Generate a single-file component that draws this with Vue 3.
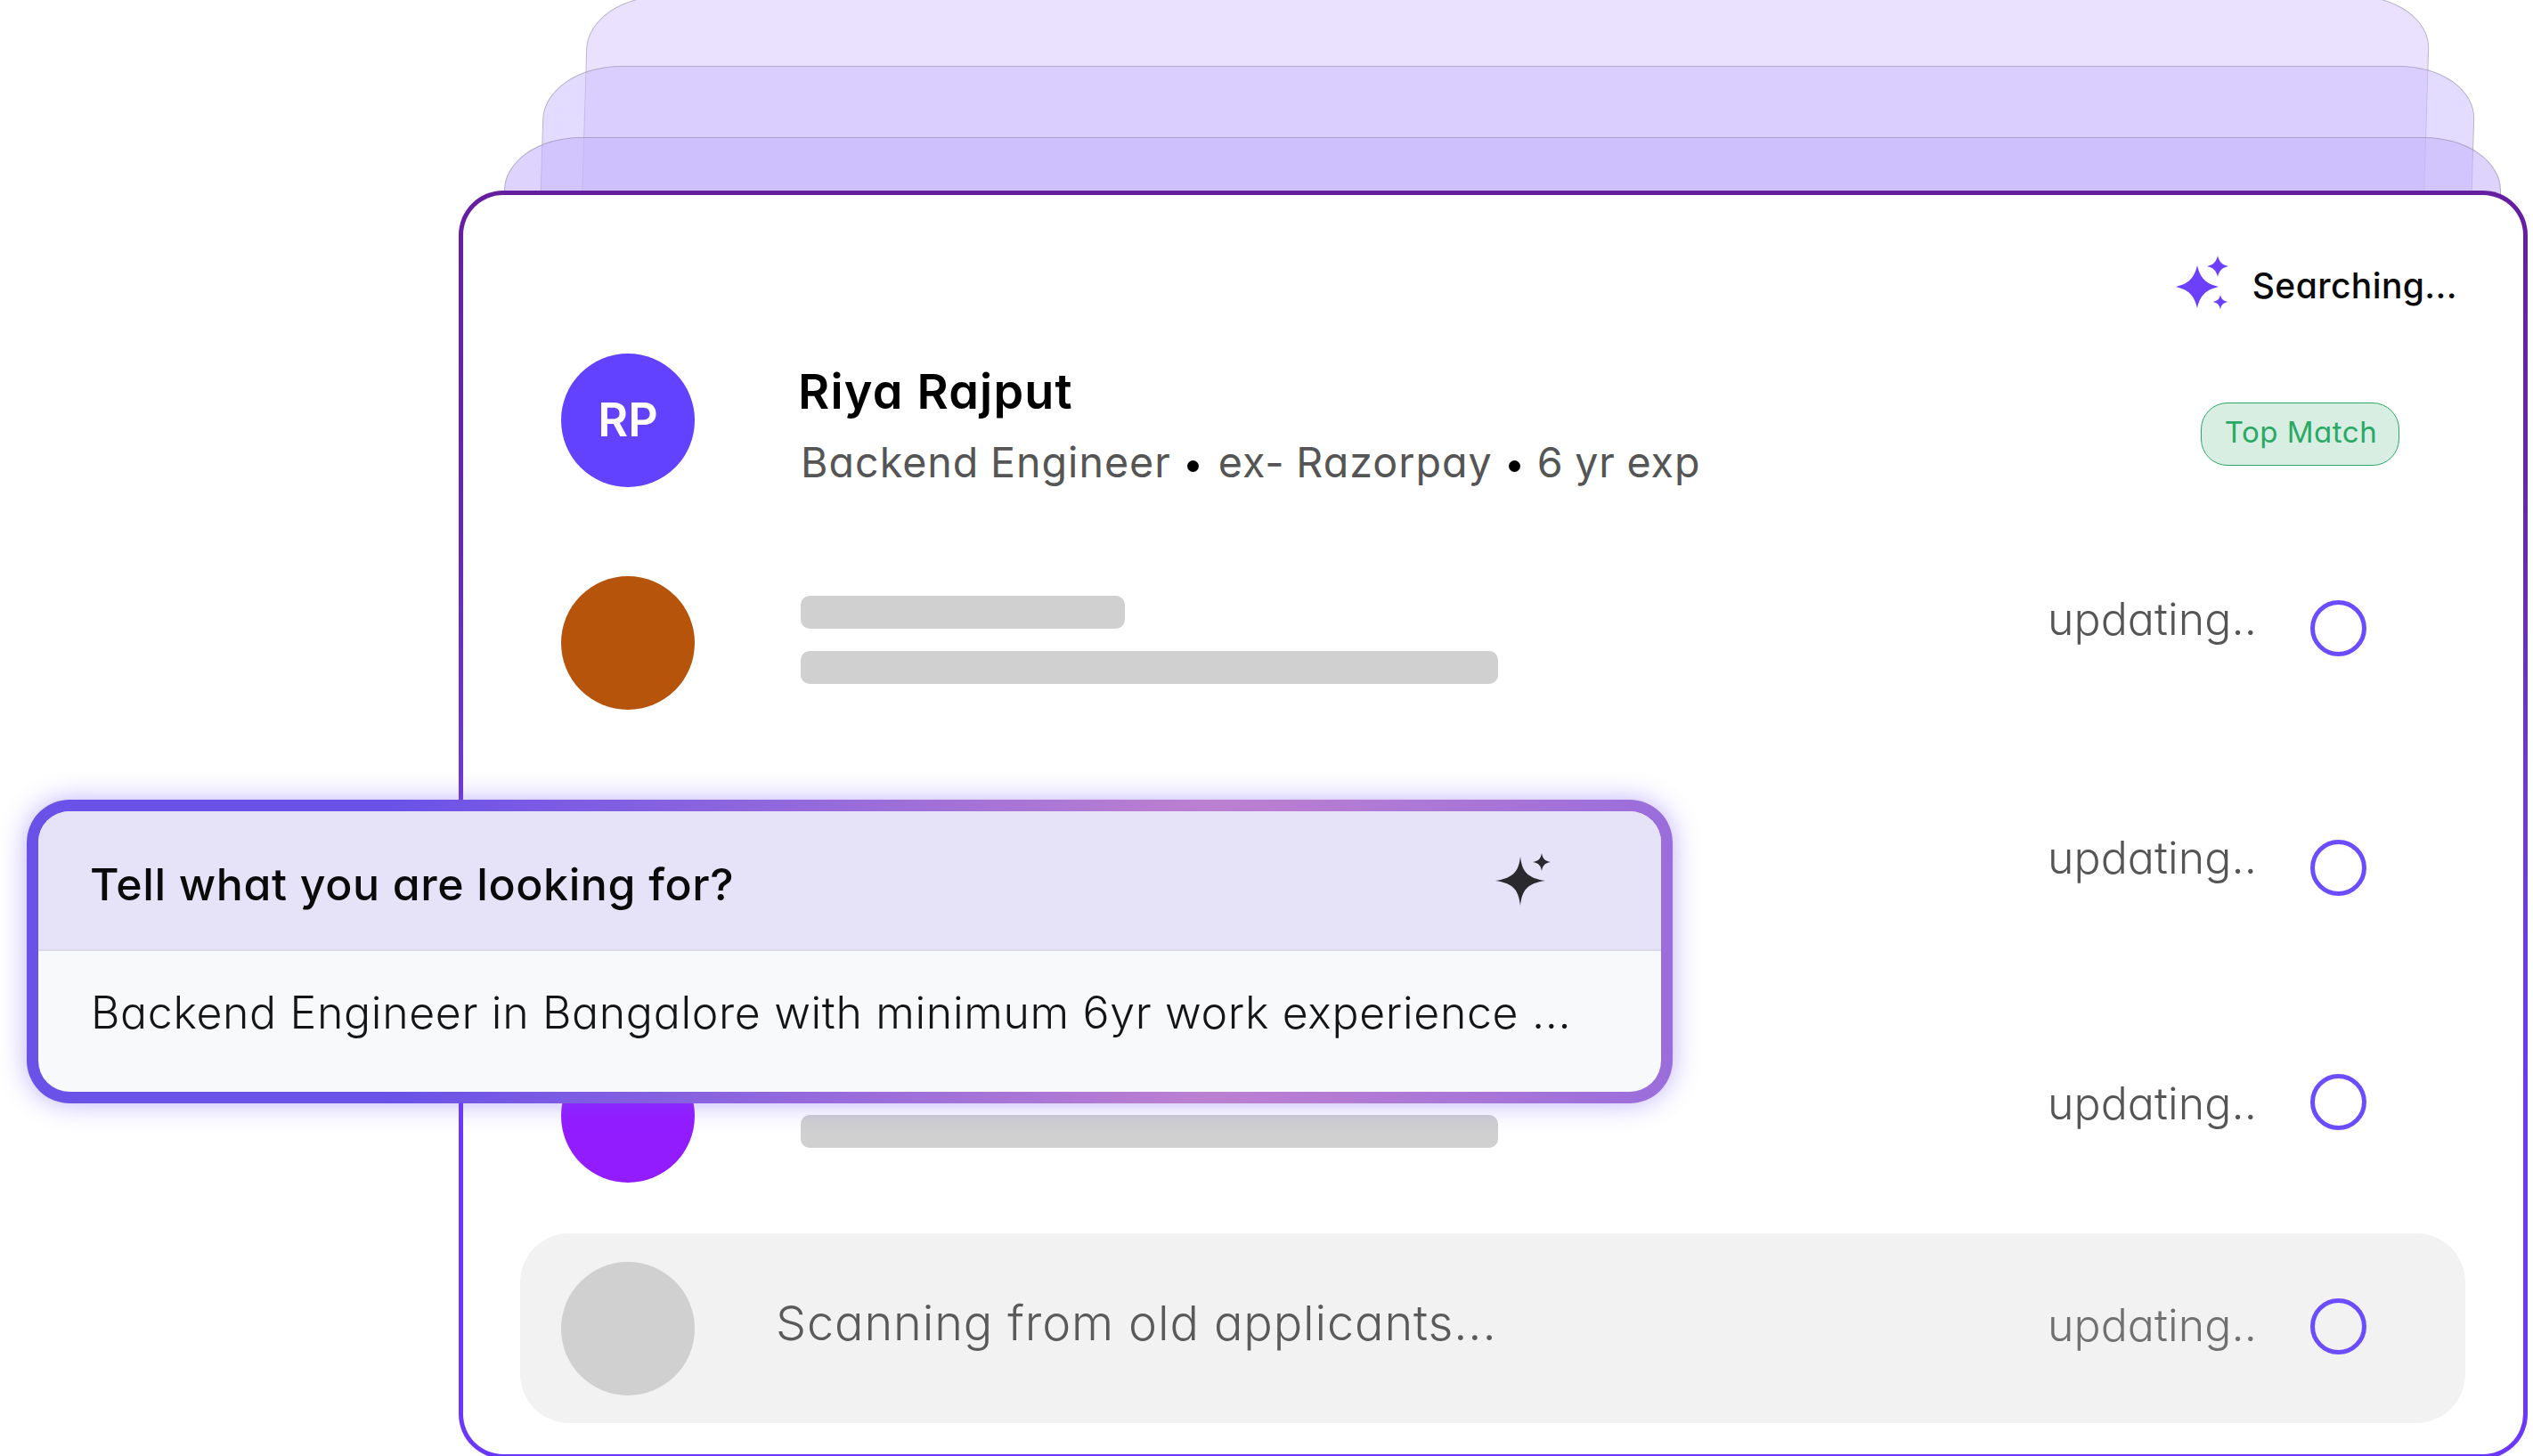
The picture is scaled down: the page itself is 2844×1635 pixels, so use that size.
<script setup>
// skeleton rows below the matched candidate, offsets follow the source layout
const rows = [
  { id: 1, color: '#b5540a', height: 265, barTop: 22, firstBar: true, textTop: 18, ringTop: 27 },
  { id: 2, color: '#17a58a', height: 266, barTop: 22, firstBar: true, textTop: 21, ringTop: 31 },
  { id: 3, color: '#931cff', height: 207, barTop: 12, firstBar: true, textTop: 31, ringTop: 28 }
]
</script>

<template>
  <div class="page">
    <div class="ghost ghost-back"></div>
    <div class="ghost ghost-mid"></div>
    <div class="ghost ghost-front"></div>

    <main class="card">
      <div class="search-status">
        <svg class="spark" width="59" height="61" viewBox="0 0 59 61" fill="#6b3ffb">
          <path d="M24 11C27.5 26 34 31.5 48 35C34 38.5 27.5 44 24 59C20.5 44 14 38.5 0 35C14 31.5 20.5 26 24 11Z" />
          <path d="M47 0C48.5 7 52 10.5 59 12C52 13.5 48.5 17 47 24C45.5 17 42 13.5 35 12C42 10.5 45.5 7 47 0Z" />
          <path d="M50 44C51 49 53.5 51 58.5 52C53.5 53 51 55 50 60.5C49 55 46.5 53 41.5 52C46.5 51 49 49 50 44Z" />
        </svg>
        <span class="search-label">Searching...</span>
      </div>

      <section class="row row-top">
        <div class="avatar avatar-rp">RP</div>
        <div class="info">
          <h2 class="name">Riya Rajput</h2>
          <p class="role">Backend Engineer<i class="dot"></i>ex- Razorpay<i class="dot dot-last"></i>6 yr exp</p>
        </div>
        <span class="badge">Top Match</span>
      </section>

      <section v-for="row in rows" :key="row.id" class="row" :style="{ height: row.height + 'px' }">
        <div class="avatar" :style="{ background: row.color }"></div>
        <div class="bars" :style="{ paddingTop: row.barTop + 'px' }">
          <div class="bar bar-short"></div>
          <div class="bar bar-long"></div>
        </div>
        <div class="status">
          <span class="status-text" :style="{ marginTop: row.textTop + 'px' }">updating..</span>
          <span class="ring" :style="{ marginTop: row.ringTop + 'px' }"></span>
        </div>
      </section>

      <section class="row-scan">
        <div class="avatar avatar-grey"></div>
        <p class="scan-text">Scanning from old applicants...</p>
        <div class="status status-scan">
          <span class="status-text status-muted">updating..</span>
          <span class="ring"></span>
        </div>
      </section>
    </main>

    <div class="prompt">
      <div class="prompt-head">
        <span>Tell what you are looking for?</span>
        <svg class="prompt-spark" width="62" height="60" viewBox="0 0 62 60" fill="#2a2a2e">
          <path d="M28 4C30 21 36 28 56 31C36 34 30 41 28 59C26 41 20 34 0 31C20 28 26 21 28 4Z" />
          <path d="M52 0C53 6 55.5 9 62 10C55.5 11 53 14 52 20C51 14 48.5 11 42 10C48.5 9 51 6 52 0Z" />
        </svg>
      </div>
      <div class="prompt-body">Backend Engineer in Bangalore with minimum 6yr work experience ...</div>
    </div>
  </div>
</template>

<style>
html, body {
  margin: 0;
  background: #fff;
}
</style>

<style scoped>
.page {
  position: relative;
  width: 2844px;
  height: 1635px;
  overflow: hidden;
  padding: 214px 6px 0 515px;
  box-sizing: border-box;
  background: #fff;
  font-family: Inter, "Liberation Sans", sans-serif;
  font-feature-settings: "cv11" 1;
}

/* stacked sheets behind the card */
.ghost {
  position: absolute;
  height: 300px;
  box-sizing: border-box;
  border: 1.5px solid rgba(110, 110, 120, 0.38);
  border-radius: 86px / 60px;
  transform-origin: top left;
}
.ghost-back {
  left: 660px;
  top: -5px;
  width: 2069px;
  background: rgba(215, 201, 254, 0.55);
  transform: skewX(-1.75deg);
}
.ghost-mid {
  left: 611px;
  top: 74px;
  width: 2169px;
  background: rgba(205, 190, 253, 0.545);
  transform: skewX(-1.75deg);
}
.ghost-front {
  left: 566px;
  top: 154px;
  width: 2242px;
  background: rgba(199, 181, 252, 0.6);
}

.card {
  position: relative;
  width: 2323px;
  height: 1424px;
  box-sizing: border-box;
  border: 5px solid transparent;
  border-radius: 50px;
  background:
    linear-gradient(#fff, #fff) padding-box,
    linear-gradient(180deg, #661ea0 0, #6527b4 27%, #6f38d8 48%, #6b38fb 70%) border-box;
}

.search-status {
  display: flex;
  justify-content: flex-end;
  align-items: center;
  gap: 27px;
  padding: 68px 74px 0 0;
  height: 61px;
  margin-bottom: 49px;
  color: #0a0a0a;
  font-size: 39px;
  font-weight: 500;
  letter-spacing: 0.4px;
  line-height: 61px;
  box-sizing: content-box;
}
.search-label {
  padding-top: 6px;
}
.spark {
  display: block;
}

.row {
  display: flex;
  align-items: flex-start;
  padding: 0 176px 0 110px;
}
.row-top {
  height: 250px;
  padding-right: 139px;
}

.avatar {
  flex: none;
  width: 150px;
  height: 150px;
  border-radius: 50%;
}
.avatar-rp {
  display: flex;
  align-items: center;
  justify-content: center;
  padding-bottom: 2px;
  box-sizing: border-box;
  background: #6241ff;
  color: #fff;
  font-size: 52px;
  font-weight: 600;
}
.avatar-grey {
  background: #d0d0d0;
}

.info {
  margin-left: 116px;
  padding-top: 13px;
}
.name {
  margin: 0;
  color: #000;
  font-size: 54px;
  font-weight: 600;
  letter-spacing: 1.2px;
  line-height: 60px;
}
.role {
  display: flex;
  align-items: center;
  margin: 21px 0 0 3px;
  color: #555;
  font-size: 46.6px;
  font-weight: 400;
  letter-spacing: 1px;
  word-spacing: -1.5px;
  line-height: 56px;
  white-space: nowrap;
}
.dot {
  width: 13px;
  height: 13px;
  margin: 8px 22px 0 18px;
  border-radius: 50%;
  background: #000;
}
.dot-last {
  margin-right: 19px;
}

.badge {
  margin: 55px 0 0 auto;
  width: 223px;
  height: 71px;
  padding-left: 2px;
  box-sizing: border-box;
  border: 1.5px solid #2aa866;
  border-radius: 30px;
  background: #d9eee2;
  color: #2aa866;
  font-size: 33px;
  letter-spacing: 0.5px;
  line-height: 64px;
  text-align: center;
}

.bars {
  margin-left: 119px;
}
.bar {
  height: 37px;
  border-radius: 10px;
  background: #d0d0d0;
}
.bar-short {
  width: 364px;
  margin-bottom: 25px;
}
.bar-long {
  width: 783px;
}

.status {
  display: flex;
  align-items: flex-start;
  gap: 60px;
  margin-left: auto;
}
.status-text {
  color: #555;
  font-size: 50px;
  font-weight: 350;
  letter-spacing: 0.1px;
  line-height: 60px;
}
.ring {
  flex: none;
  width: 63px;
  height: 63px;
  box-sizing: border-box;
  border: 5.5px solid #6c4cff;
  border-radius: 50%;
}

.row-scan {
  display: flex;
  align-items: center;
  height: 213px;
  margin: 0 65px 0 64px;
  padding: 0 111px 0 46px;
  box-sizing: border-box;
  border-radius: 55px;
  background: #f2f2f2;
}
.scan-text {
  margin: 0 0 12px 91px;
  color: #5a5a5a;
  font-size: 54px;
  font-weight: 300;
  letter-spacing: 0.87px;
  white-space: nowrap;
}
.status-scan {
  align-items: center;
  margin-bottom: 4px;
}
.status-muted {
  color: #707070;
  margin-bottom: 3px;
}

/* search prompt lying over the list */
.prompt {
  position: absolute;
  left: 30px;
  top: 898px;
  width: 1848px;
  height: 341px;
  box-sizing: border-box;
  border: 13px solid transparent;
  border-radius: 48px;
  background:
    linear-gradient(#f8f9fb, #f8f9fb) padding-box,
    linear-gradient(90deg, #6a52e8 0, #6a52e8 22%, #bc80d0 72%, #9a6ddc 100%) border-box;
  box-shadow: 0 0 30px rgba(110, 80, 250, 0.45);
  overflow: hidden;
}
.prompt-head {
  display: flex;
  align-items: center;
  justify-content: space-between;
  height: 157px;
  padding: 9px 124px 0 58px;
  box-sizing: border-box;
  border-bottom: 2px solid #dcd9e6;
  background: #e6e3f8;
  color: #0a0a0a;
  font-size: 50px;
  font-weight: 500;
  letter-spacing: 0.63px;
}
.prompt-spark {
  margin-top: -11px;
}
.prompt-body {
  padding: 34px 0 0 59px;
  color: #151515;
  font-size: 50px;
  font-weight: 350;
  letter-spacing: 0.65px;
  line-height: 70px;
  white-space: nowrap;
}
</style>
